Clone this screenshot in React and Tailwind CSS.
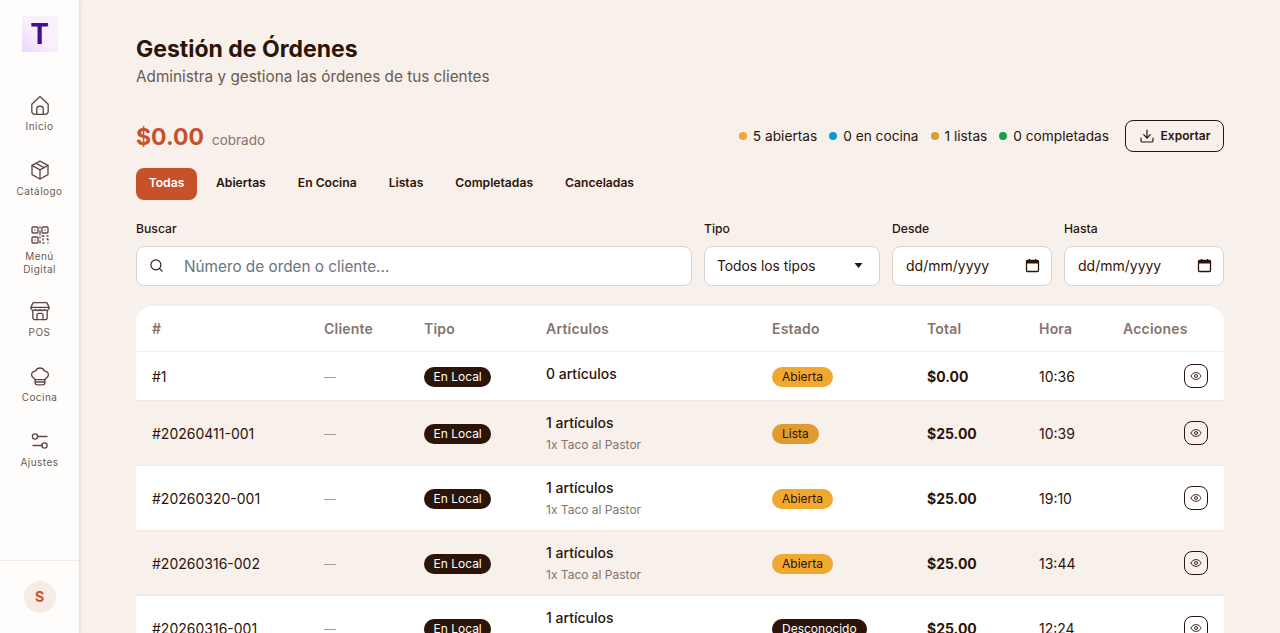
import React from "react";
import { Search, Download, Eye } from "lucide-react";

const S = ({ children }) => (
  <svg viewBox="0 0 24 24" width="24" height="24" fill="none" stroke="#5c4a42" strokeWidth="1.35" strokeLinecap="round" strokeLinejoin="round">{children}</svg>
);
const icons = {
  home: <S><path d="M3.8 11.2 12 3.6l8.2 7.6V18a3.4 3.4 0 0 1-3.4 3.4H7.2A3.4 3.4 0 0 1 3.8 18z" /><path d="M8.8 21.4v-5.6a2.6 2.6 0 0 1 2.6-2.6h1.2a2.6 2.6 0 0 1 2.6 2.6v5.6" /></S>,
  box: <S><path d="M12 3.2l8 4.2v9.2l-8 4.4-8-4.4V7.4z" /><path d="M4 7.4l8 4.4 8-4.4" /><path d="M12 11.8V21" /><path d="M8 5.3l8 4.3" /></S>,
  qr: <S><rect x="4" y="4" width="6" height="6" rx="1" /><rect x="14" y="4" width="6" height="6" rx="1" /><rect x="4" y="14" width="6" height="6" rx="1" /><path d="M7 7h.01M17 7h.01M7 17h.01M12 4v1M12 8v3.5M12 14v1M14 13h2M19 13h1M12 18v2M15 16v1M15 20h1M19 16h1v1M20 20h.01" /></S>,
  pos: <S><path d="M6 3.6h12a1.5 1.5 0 0 1 1.3.8l1.9 4.2a2.7 2.7 0 0 1-4.7 1.9 3 3 0 0 1-4.5 0 3 3 0 0 1-4.5 0 2.7 2.7 0 0 1-4.7-1.9l1.9-4.2a1.5 1.5 0 0 1 1.3-.8z" /><path d="M3.2 8.4h17.6" /><path d="M4.8 11.6v6.8a2.2 2.2 0 0 0 2.2 2.2h10a2.2 2.2 0 0 0 2.2-2.2v-6.8" /><path d="M9 20.6v-4.8a1.5 1.5 0 0 1 1.5-1.5h3a1.5 1.5 0 0 1 1.5 1.5v4.8" /></S>,
  chef: <S><path d="M7.2 15.6 4.2 12.6a3.4 3.4 0 0 1-.2-3.6c.7-1.3 2-2 3.4-1.9C8.4 5.2 10.1 4 12 4s3.6 1.2 4.6 3.1c1.4-.1 2.7.6 3.4 1.9a3.4 3.4 0 0 1-.2 3.6l-3 3z" /><path d="M7.2 15.6V19a1.8 1.8 0 0 0 1.8 1.8h6A1.8 1.8 0 0 0 16.8 19v-3.4" /><path d="M7.2 18h9.6" /></S>,
  sliders: <S><circle cx="7" cy="7.5" r="2.6" /><path d="M9.6 7.5H19" /><circle cx="16.5" cy="16.5" r="2.6" /><path d="M5 16.5h8.9" /></S>,
};

const nav = [
  ["home", "Inicio"],
  ["box", "Catálogo"],
  ["qr", "Menú Digital"],
  ["pos", "POS"],
  ["chef", "Cocina"],
  ["sliders", "Ajustes"],
];

const rows = [
  { id: "#1", n: "0 artículos", estado: "Abierta", total: "$0.00", hora: "10:36" },
  { id: "#20260411-001", n: "1 artículos", d: "1x Taco al Pastor", estado: "Lista", total: "$25.00", hora: "10:39" },
  { id: "#20260320-001", n: "1 artículos", d: "1x Taco al Pastor", estado: "Abierta", total: "$25.00", hora: "19:10" },
  { id: "#20260316-002", n: "1 artículos", d: "1x Taco al Pastor", estado: "Abierta", total: "$25.00", hora: "13:44" },
  { id: "#20260316-001", n: "1 artículos", d: "1x Taco al Pastor", estado: "Desconocido", total: "$25.00", hora: "12:24" },
];

const badge = {
  Abierta: "bg-[#f0a830] text-[#2c1408]",
  Lista: "bg-[#e09a30] text-[#2c1408]",
  Desconocido: "bg-[#2c1408] text-white",
};

const Stat = ({ color, children }) => (
  <span className="flex items-center gap-[6px]">
    <span className={`w-2 h-2 rounded-full ${color}`} />
    {children}
  </span>
);

const Field = ({ label, className, children }) => (
  <div className={className}>
    <div className="text-[12.2px] font-medium text-[#2c1408] leading-4 mb-[9px]">{label}</div>
    {children}
  </div>
);

const DateBox = () => (
  <div className="h-10 bg-white border border-[#d9d2ce] rounded-lg pl-[13px] pr-[11px] flex items-center justify-between text-sm text-[#2c1408]">
    <span>dd/mm/yyyy</span>
    <svg width="15" height="15" viewBox="0 0 15 15" fill="none"><rect x="1.5" y="2.5" width="12" height="11" rx="1" stroke="#2c1408" strokeWidth="1.3" /><rect x="1.5" y="2.5" width="12" height="3" fill="#2c1408" /><path d="M4.5 1v2M10.5 1v2" stroke="#2c1408" strokeWidth="1.3" /></svg>
  </div>
);

export default function App() {
  return (
    <div className="h-screen flex overflow-hidden bg-[#f7f0eb] text-[#2c1408] font-['Inter',sans-serif]">
      <aside className="w-[79px] shrink-0 h-full bg-[#fffdfc] flex flex-col shadow-[1px_0_3px_rgba(60,30,10,0.12)] z-10">
        <div className="flex justify-center pt-4">
          <div className="w-9 h-9 bg-gradient-to-tr from-[#e9d8fb] via-[#faf0fc] to-[#fbf1fb] flex items-center justify-center text-[#45108a] text-[28px] font-bold leading-none pb-[1px]">T</div>
        </div>
        <nav className="flex-1 flex flex-col items-center pt-[41px] gap-[25px]">
          {nav.map(([k, label]) => (
            <div key={k} className={`flex flex-col items-center gap-[3px] w-full ${k === "qr" ? "-mb-[2px]" : ""}`}>
              {icons[k]}
              <span className={`text-[10px] leading-[13px] tracking-[0.45px] text-[#6b5a52] text-center ${k === "qr" ? "w-[50px]" : ""}`}>{label}</span>
            </div>
          ))}
        </nav>
        <div className="border-t border-[#f0ebe8] h-[73px] flex justify-center pt-5 shrink-0">
          <div className="w-8 h-8 rounded-full bg-[#f7ebe5] text-[#c8502a] text-sm font-bold flex items-center justify-center">S</div>
        </div>
      </aside>

      <main className="flex-1 min-w-0 pl-[57px] pr-14 pt-[34px]">
        <h1 className="text-[23px] font-bold leading-[30px] text-[#2c1408]">Gestión de Órdenes</h1>
        <p className="text-[15.3px] leading-6 text-[#6b5a52] mt-[1px]">Administra y gestiona las órdenes de tus clientes</p>

        <div className="flex items-center justify-between mt-7">
          <div className="flex items-baseline gap-2 pt-[3px] pb-[1px]">
            <span className="text-[23px] font-bold text-[#c8502a]">$0.00</span>
            <span className="text-[13.5px] text-[#85746c]">cobrado</span>
          </div>
          <div className="flex items-center gap-4 text-[13.7px]">
            <div className="flex items-center gap-3 text-[#2c1408]">
              <Stat color="bg-[#f0a830]">5 abiertas</Stat>
              <Stat color="bg-[#0e9ac8]">0 en cocina</Stat>
              <Stat color="bg-[#e09a30]">1 listas</Stat>
              <Stat color="bg-[#18a050]">0 completadas</Stat>
            </div>
            <button className="h-8 w-[99px] border border-[#2c1408] rounded-lg flex items-center justify-center gap-[6px] text-xs font-semibold">
              <Download size={16} strokeWidth={1.75} />Exportar
            </button>
          </div>
        </div>

        <div className="flex items-center gap-[6px] mt-3 text-[12.15px] font-semibold">
          <span className="h-8 w-[61px] rounded-lg bg-[#c8502a] text-white flex items-center justify-center">Todas</span>
          {["Abiertas", "En Cocina", "Listas", "Completadas", "Canceladas"].map((t) => (
            <span key={t} className="h-8 px-[13px] flex items-center">{t}</span>
          ))}
        </div>

        <div className="flex gap-3 mt-[21px]">
          <Field label="Buscar" className="flex-1">
            <div className="h-10 bg-white border border-[#d9d2ce] rounded-lg flex items-center pl-3">
              <Search size={15} strokeWidth={1.75} className="text-[#2c1408]" />
              <span className="ml-5 pt-[3px] text-[15.3px] text-[#6b7280]">Número de orden o cliente...</span>
            </div>
          </Field>
          <Field label="Tipo" className="w-[176px]">
            <div className="h-10 bg-white border border-[#d9d2ce] rounded-lg pl-3 pr-4 flex items-center justify-between text-[13.8px]">
              <span className="pt-[1px]">Todos los tipos</span>
              <svg width="9" height="5" viewBox="0 0 9 5"><path d="M0.5 0h8L4.5 5z" fill="#2c1408" /></svg>
            </div>
          </Field>
          <Field label="Desde" className="w-40"><DateBox /></Field>
          <Field label="Hasta" className="w-40"><DateBox /></Field>
        </div>

        <div className="mt-5 bg-white rounded-2xl overflow-hidden">
          <table className="w-full table-fixed border-collapse">
            <colgroup>
              <col className="w-[172px]" /><col className="w-[100px]" /><col className="w-[122px]" /><col className="w-[226px]" />
              <col className="w-[155px]" /><col className="w-[112px]" /><col className="w-[84px]" /><col className="w-[117px]" />
            </colgroup>
            <thead>
              <tr className="h-[46px] border-b border-[#f4eeeb] text-sm tracking-[0.2px] text-[#85746c] text-left">
                {["#", "Cliente", "Tipo", "Artículos", "Estado", "Total", "Hora", "Acciones"].map((h) => (
                  <th key={h} className="px-4 pt-[2px] font-semibold">{h}</th>
                ))}
              </tr>
            </thead>
            <tbody>
              {rows.map((r, i) => (
                <tr key={r.id} className={`border-b border-[#efe9e5] ${r.d ? "h-[65px]" : "h-[49px]"} ${i % 2 ? "bg-[#f7f0eb]" : ""}`}>
                  <td className="px-4 pt-[2px] text-sm">{r.id}</td>
                  <td className="px-4 pt-[2px] text-xs text-[#a89c96]">—</td>
                  <td className="px-4 pt-[2px]">
                    <div className="flex">
                      <span className="flex h-5 items-center px-[9.5px] rounded-full bg-[#2c1408] text-white text-xs">En Local</span>
                    </div>
                  </td>
                  <td className="px-4">
                    <div className={`text-sm font-medium leading-5 ${r.d ? "" : "-mt-[5px]"}`}>{r.n}</div>
                    {r.d && <div className="text-xs text-[#85746c] leading-4 mt-1">{r.d}</div>}
                  </td>
                  <td className="px-4 pt-[2px]">
                    <div className="flex">
                      <span className={`flex h-5 items-center px-[10px] rounded-full text-xs ${badge[r.estado]}`}>{r.estado}</span>
                    </div>
                  </td>
                  <td className="px-4 pt-[2px] text-sm font-bold">{r.total}</td>
                  <td className="px-4 pt-[2px] text-sm">{r.hora}</td>
                  <td className="px-4">
                    <div className="flex justify-end">
                      <span className="w-6 h-6 border border-[#2c1408] rounded-lg flex items-center justify-center">
                        <Eye size={12} strokeWidth={1.75} />
                      </span>
                    </div>
                  </td>
                </tr>
              ))}
            </tbody>
          </table>
        </div>
      </main>
    </div>
  );
}
